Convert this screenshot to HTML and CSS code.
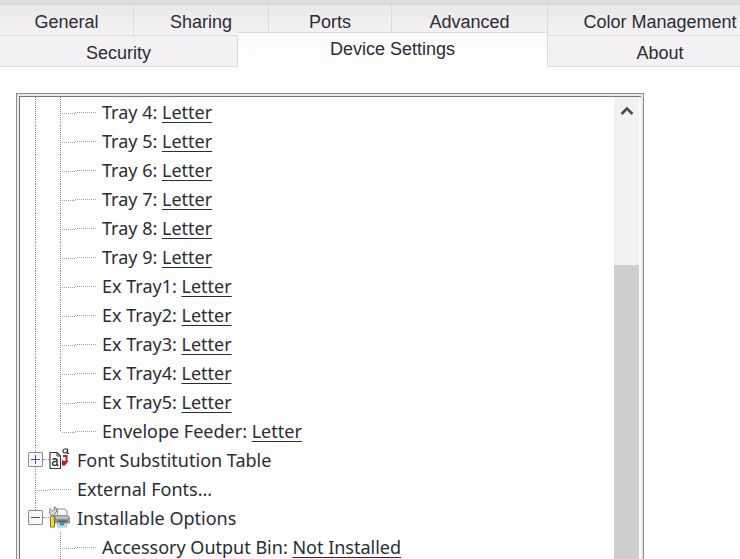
FILE: index.html
```html
<!DOCTYPE html>
<html lang="en">
<head>
    <meta charset="UTF-8">
    <meta name="viewport" content="width=device-width, initial-scale=1.0">
    <title>Printer Properties</title>
    <link rel="stylesheet" href="styles.css">
</head>
<body>
    <div class="title-edge"></div>

    <div class="tabs" role="tablist">
        <div class="tab-row tab-row-back">
            <button class="tab" role="tab">General</button>
            <button class="tab" role="tab">Sharing</button>
            <button class="tab" role="tab">Ports</button>
            <button class="tab" role="tab">Advanced</button>
            <button class="tab tab-last" role="tab">Color Management</button>
        </div>
        <div class="tab-row tab-row-front">
            <button class="tab" role="tab">Security</button>
            <button class="tab active" role="tab" aria-selected="true">Device Settings</button>
            <button class="tab tab-last" role="tab">About</button>
        </div>
    </div>

    <main class="panel">
        <div class="panel-inner">
            <ul class="tree">
                <li class="row"><span class="guide"></span><span class="branch"></span>Tray 4:&nbsp;<a href="#">Letter</a></li>
                <li class="row"><span class="guide"></span><span class="branch"></span>Tray 5:&nbsp;<a href="#">Letter</a></li>
                <li class="row"><span class="guide"></span><span class="branch"></span>Tray 6:&nbsp;<a href="#">Letter</a></li>
                <li class="row"><span class="guide"></span><span class="branch"></span>Tray 7:&nbsp;<a href="#">Letter</a></li>
                <li class="row"><span class="guide"></span><span class="branch"></span>Tray 8:&nbsp;<a href="#">Letter</a></li>
                <li class="row"><span class="guide"></span><span class="branch"></span>Tray 9:&nbsp;<a href="#">Letter</a></li>
                <li class="row"><span class="guide"></span><span class="branch"></span>Ex Tray1:&nbsp;<a href="#">Letter</a></li>
                <li class="row"><span class="guide"></span><span class="branch"></span>Ex Tray2:&nbsp;<a href="#">Letter</a></li>
                <li class="row"><span class="guide"></span><span class="branch"></span>Ex Tray3:&nbsp;<a href="#">Letter</a></li>
                <li class="row"><span class="guide"></span><span class="branch"></span>Ex Tray4:&nbsp;<a href="#">Letter</a></li>
                <li class="row"><span class="guide"></span><span class="branch"></span>Ex Tray5:&nbsp;<a href="#">Letter</a></li>
                <li class="row"><span class="guide"></span><span class="branch branch-end"></span>Envelope Feeder:&nbsp;<a href="#">Letter</a></li>
                <li class="row">
                    <span class="node"><button class="toggle" aria-label="Expand Font Substitution Table"><svg width="13" height="13" viewBox="0 0 13 13"><path d="M2 6.500h9M6.500 2v9" stroke="#4a4f8c"/></svg></button></span>
                    <span class="stub"></span>
                    <svg class="icon" width="21" height="24" viewBox="0 0 21 24">
                        <path d="M1 4.500h7l3.500 3.500v12.500H1z" fill="#fff" stroke="#3c3c3c" stroke-width="1.200"/>
                        <path d="M8 4.500v3.500h3.500" fill="none" stroke="#3c3c3c"/>
                        <path d="M3.500 11.500q2.500-1.500 4.500 0v6M8 13.500c-3-.3-4.500.5-4.500 2.200 0 2.400 3.500 2 4.500.3M8 17.500h1.500" fill="none" stroke="#222" stroke-width="1.300"/>
                        <path d="M18.500 1h-3q-1.500 0-1.500 2t1.500 2 3-1.500M18.500.5v5H20" fill="none" stroke="#333" stroke-width="1.200"/>
                        <path d="M14 8h3.500v5" fill="none" stroke="#c4161c" stroke-width="2"/>
                        <path d="M13 11.500l1.500 1.500h5L16 17.500h-3z" fill="#c4161c"/>
                    </svg>
                    Font Substitution Table
                </li>
                <li class="row"><span class="branch"></span>External Fonts...</li>
                <li class="row">
                    <span class="node node-end"><button class="toggle" aria-label="Collapse Installable Options"><svg width="13" height="13" viewBox="0 0 13 13"><path d="M2 6.500h9" stroke="#4a4f8c"/></svg></button></span>
                    <span class="stub"></span>
                    <svg class="icon" width="21" height="24" viewBox="0 0 21 24">
                        <path d="M8.500 3h7.500l2 2v5H8.500z" fill="#f4f6f8" stroke="#8d9096"/>
                        <path d="M6 9h13l2 2.500v6H6z" fill="#8f949c"/>
                        <path d="M7 10.500h12v2H7z" fill="#c9ccd1"/>
                        <path d="M9 14.500h9v2H9z" fill="#555a62"/>
                        <path d="M8.500 17h9v4h-9z" fill="#dff3fa" stroke="#aab4bb"/>
                        <path d="M10.500 16.500h5v3h-5z" fill="#159bc4"/>
                        <path d="M1 2.500L3.500 5 6 3 5 1c3 0 4 3.500 1.500 6L5 9.500H2.500L1 7.500C-.3 5.500 0 3.500 1 2.500z" fill="#d8dadd" stroke="#777b81"/>
                        <path d="M1.500 10h4v11h-4z" fill="#e2cf2a" stroke="#85770d"/>
                        <path d="M3 10.500v10" stroke="#fff07a"/>
                    </svg>
                    Installable Options
                </li>
                <li class="row"><span class="guide guide-empty"></span><span class="branch"></span>Accessory Output Bin:&nbsp;<a href="#">Not Installed</a></li>
            </ul>

            <div class="scrollbar">
                <button class="scroll-up" aria-label="Scroll up"><svg width="14" height="10" viewBox="0 0 14 10"><path d="M1.500 8L7 2.500 12.500 8" fill="none" stroke="#4c4a4d" stroke-width="2.600"/></svg></button>
                <div class="scroll-thumb"></div>
            </div>
        </div>
    </main>
</body>
</html>
```
FILE: styles.css
```css
* {
    box-sizing: border-box;
    margin: 0;
    padding: 0;
}

body {
    display: flex;
    flex-direction: column;
    height: 100vh;
    overflow: hidden;
    background-color: #fefefe;
    color: #2c2c34;
    font-family: "Noto Sans", "Open Sans", sans-serif;
    font-size: 18px;
}

button {
    border: none;
    background: none;
    color: inherit;
    font: inherit;
}

.title-edge {
    height: 5px;
    background: linear-gradient(#e0e0e0, #dadada);
    flex-shrink: 0;
}

/* Tabs */
.tabs {
    flex-shrink: 0;
    font-family: "Liberation Sans", Arial, sans-serif;
    font-size: 18px;
    background: linear-gradient(#e9e8e9, #f4f2f4 30px, #fefefe 31px);
}

.tab-row {
    display: grid;
}

.tab-row-back {
    grid-template-columns: 134fr 135fr 123fr 156fr 192fr;
}

.tab-row-front {
    grid-template-columns: 238fr 310fr 192fr;
}

.tab {
    height: 31px;
    padding-top: 4px;
    border-right: 1px solid #dcdadc;
    border-bottom: 1px solid #dcdadc;
    white-space: nowrap;
}

.tab-row-front .tab {
    background-color: #f3f1f3;
}

.tab-last {
    padding-left: 32px;
    border-right: none;
}

.tab-row-front .active {
    height: 35px;
    margin-top: -4px;
    padding: 0 0 2px;
    border: 1px solid #dcdadc;
    border-bottom: none;
    border-left: none;
    background: linear-gradient(#fafafa, #fefefe);
}

/* Settings tree */
.panel {
    flex: 1;
    display: flex;
    min-height: 0;
    margin: 26px 96px 0 16px;
    padding: 2px 2px 0;
    border: 1px solid #8e8c8e;
    border-bottom: none;
    background-color: #e9e8e9;
}

.panel-inner {
    flex: 1;
    display: flex;
    padding-right: 2px;
    border-top: 1px solid #77757a;
    border-left: 1px solid #77757a;
    background-color: #fefefe;
    overflow: hidden;
}

.tree {
    flex: 1;
    padding-left: 8px;
    list-style: none;
}

.row {
    display: flex;
    align-items: center;
    height: 29px;
    white-space: nowrap;
}

.row a {
    color: inherit;
    text-decoration-thickness: 1px;
    text-underline-offset: 3px;
}

.guide,
.branch,
.node {
    align-self: stretch;
    flex-shrink: 0;
    background-image: repeating-linear-gradient(to bottom, #8a8a8a 0 1px, transparent 1px 2px);
    background-position: 7px 0;
    background-size: 1px 100%;
    background-repeat: no-repeat;
}

.guide {
    width: 25px;
}

.guide-empty {
    background: none;
}

.branch {
    width: 49px;
    background-image:
        repeating-linear-gradient(to bottom, #8a8a8a 0 1px, transparent 1px 2px),
        repeating-linear-gradient(to right, #a0a0a0 0 1px, transparent 1px 2px),
        repeating-linear-gradient(to right, #a0a0a0 0 1px, transparent 1px 2px);
    background-position: 7px 0, 9px 16px, 22px 15px;
    background-size: 1px 100%, 13px 1px, 21px 1px;
}

.branch-end {
    background-size: 1px 16px, 13px 1px, 21px 1px;
}

.node {
    display: flex;
    align-items: center;
    width: 15px;
}

.node-end {
    background-size: 1px 50%;
}

.toggle {
    width: 15px;
    height: 15px;
    border: 1px solid #8c8c90;
    border-radius: 1px;
    background-color: #f6f6f8;
}

.toggle svg {
    display: block;
}

.stub {
    width: 6px;
    border-top: 1px dotted #8a8a8a;
}

.icon {
    margin-right: 7px;
}

/* Scrollbar */
.scrollbar {
    display: flex;
    flex-direction: column;
    width: 25px;
    background-color: #f3f1f3;
}

.scroll-up {
    height: 28px;
    padding-bottom: 4px;
}

.scroll-thumb {
    flex: 1;
    margin-top: 140px;
    background-color: #cfcdcf;
}
```
